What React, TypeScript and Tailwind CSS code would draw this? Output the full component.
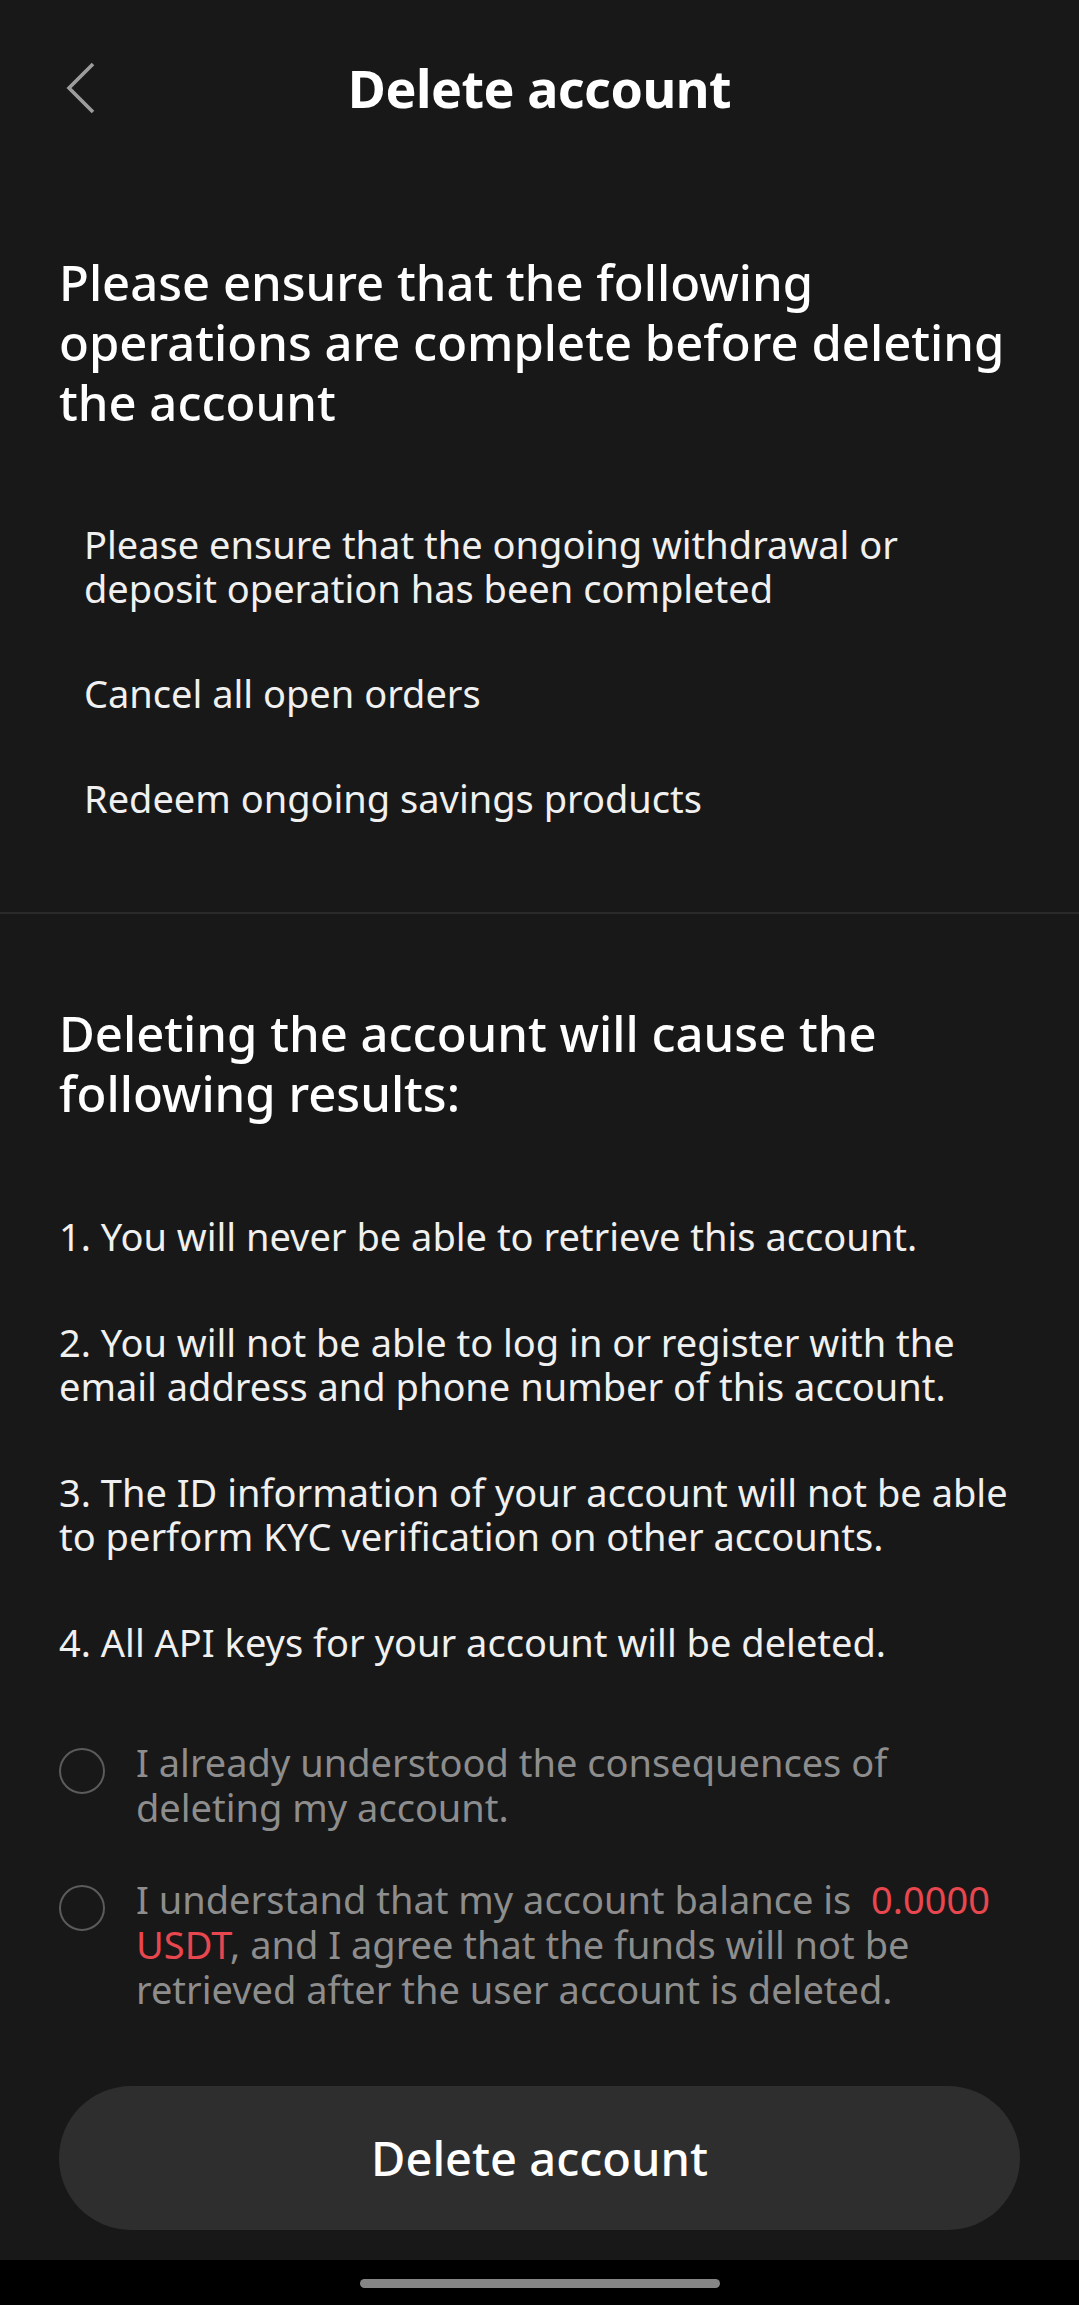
import React from 'react';

const prechecks = [
  'Please ensure that the ongoing withdrawal or deposit operation has been completed',
  'Cancel all open orders',
  'Redeem ongoing savings products',
];

const results = [
  '1. You will never be able to retrieve this account.',
  '2. You will not be able to log in or register with the email address and phone number of this account.',
  '3. The ID information of your account will not be able to perform KYC verification on other accounts.',
  '4. All API keys for your account will be deleted.',
];

function BackIcon() {
  return (
    <svg width="30" height="52" viewBox="0 0 30 52" fill="none" aria-hidden="true">
      <polyline
        points="27,2 3,26 27,50"
        stroke="#9c9c9c"
        strokeWidth="3.6"
        strokeLinecap="butt"
        strokeLinejoin="miter"
      />
    </svg>
  );
}

function Radio({ children }: { children: React.ReactNode }) {
  return (
    <label className="flex items-start gap-[31px]">
      <span className="mt-[8px] h-[46px] w-[46px] shrink-0 rounded-full border-[2.5px] border-[#5b5b5b]" />
      <span className="text-[38px] leading-[45px] text-[#8d8d8d]">{children}</span>
    </label>
  );
}

export default function App() {
  return (
    <div className="flex min-h-screen flex-col bg-[#181818] font-['Noto_Sans','Open_Sans',sans-serif] text-white">
      {/* top bar */}
      <header className="grid h-[176px] grid-cols-[1fr_auto_1fr] items-center">
        <button className="flex items-center pl-[66px]">
          <BackIcon />
        </button>
        <h1 className="text-[52px] font-bold tracking-[-0.5px]">Delete account</h1>
        <div />
      </header>

      <section className="px-[59px] pb-[92px] pt-[76px]">
        <h2 className="text-[49px] font-medium leading-[60px]">
          Please ensure that the following operations are complete before deleting the account
        </h2>
        <ul className="mt-[90px] flex flex-col gap-[61px] pl-[25px] pr-[40px] text-[38px] leading-[44px] text-[#f0f0f0]">
          {prechecks.map(item => (
            <li key={item}>{item}</li>
          ))}
        </ul>
      </section>

      <div className="h-[2px] bg-[#2a2a2a]" />

      <section className="px-[59px] pt-[89px]">
        <h2 className="pr-[60px] text-[49px] font-medium leading-[60px]">
          Deleting the account will cause the following results:
        </h2>
        <ol className="mt-[91px] flex flex-col gap-[62px] text-[38px] leading-[44px] text-[#f0f0f0]">
          {results.map(item => (
            <li key={item}>{item}</li>
          ))}
        </ol>

        <div className="mt-[76px] flex flex-col gap-[47px]">
          <Radio>I already understood the consequences of deleting my account.</Radio>
          <Radio>
            I understand that my account balance is&nbsp;{' '}
            <span className="text-[#e8474f]">0.0000</span>{' '}
            <span className="text-[#e8474f]">USDT</span>, and I agree that the funds will not be
            retrieved after the user account is deleted.
          </Radio>
        </div>

        <button className="mt-[74px] flex h-[144px] w-full items-center justify-center rounded-full bg-[#2e2e2e] text-[47px] font-medium">
          Delete account
        </button>
      </section>

      <div className="h-[30px]" />

      {/* system gesture bar */}
      <div className="flex h-[47px] items-center justify-center bg-black">
        <div className="h-[9px] w-[360px] rounded-full bg-[#858585]" />
      </div>
    </div>
  );
}
